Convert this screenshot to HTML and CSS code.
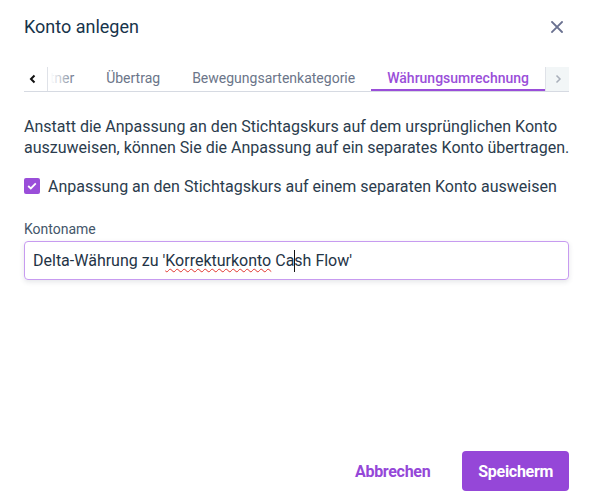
FILE: index.html
```html
<!DOCTYPE html>
<html lang="de">
<head>
<meta charset="utf-8">
<title>Konto anlegen</title>
<link rel="stylesheet" href="styles.css">
</head>
<body>
<div class="dialog">
  <header class="dialog-header">
    <h1 class="dialog-title">Konto anlegen</h1>
    <button class="close-btn" aria-label="Schließen">
      <svg width="12" height="12" viewBox="0 0 12 12"><path d="M1 1 L11 11 M11 1 L1 11" stroke="currentColor" stroke-width="1.8" fill="none" stroke-linecap="square"/></svg>
    </button>
  </header>

  <nav class="tabs">
    <button class="tab-scroll tab-scroll-left" aria-label="Zurück">
      <svg width="8" height="10" viewBox="0 0 8 10"><path d="M5.5 1.5 L2 5 L5.5 8.5" stroke="currentColor" stroke-width="2" fill="none"/></svg>
    </button>
    <div class="tab-viewport">
      <div class="tab-list">
        <span class="tab">Partner</span>
        <span class="tab">Übertrag</span>
        <span class="tab">Bewegungsartenkategorie</span>
        <span class="tab tab-active">Währungsumrechnung</span>
      </div>
    </div>
    <button class="tab-scroll tab-scroll-right" aria-label="Weiter" disabled>
      <svg width="8" height="10" viewBox="0 0 8 10"><path d="M2.5 1.5 L6 5 L2.5 8.5" stroke="currentColor" stroke-width="1.5" fill="none"/></svg>
    </button>
  </nav>

  <section class="dialog-body">
    <p class="intro">Anstatt die Anpassung an den Stichtagskurs auf dem ursprünglichen Konto auszuweisen, können Sie die Anpassung auf ein separates Konto übertragen.</p>

    <label class="check-row">
      <span class="checkbox">
        <svg width="10" height="8" viewBox="0 0 10 8"><path d="M1.2 4 L3.8 6.4 L8.8 1.4" stroke="#fff" stroke-width="1.8" fill="none"/></svg>
      </span>
      <span>Anpassung an den Stichtagskurs auf einem separaten Konto ausweisen</span>
    </label>

    <div class="field">
      <div class="field-label">Kontoname</div>
      <div class="text-input">Delta-Währung zu '<span class="misspelled">Korrekturkonto</span> Ca<span class="caret"></span>sh Flow'</div>
    </div>
  </section>

  <footer class="dialog-footer">
    <button class="btn btn-text">Abbrechen</button>
    <button class="btn btn-primary">Speicherm</button>
  </footer>
</div>
</body>
</html>
```

FILE: styles.css
```css
* { box-sizing: border-box; }

html, body {
  margin: 0;
  padding: 0;
  background: #ffffff;
}

body {
  font-family: Roboto, "Noto Sans", sans-serif;
  color: #2b3c4d;
}

button {
  font-family: inherit;
  border: none;
  background: none;
  padding: 0;
  cursor: pointer;
}

.dialog {
  width: 592px;
  height: 504px;
  display: flex;
  flex-direction: column;
  padding: 0 23px 0 24px;
}

/* header */
.dialog-header {
  display: flex;
  align-items: center;
  justify-content: space-between;
  padding-top: 15px;
}

.dialog-title {
  margin: 0;
  font-size: 18px;
  line-height: 24px;
  font-weight: 400;
  color: #17344b;
}

.close-btn {
  width: 24px;
  height: 24px;
  display: flex;
  align-items: center;
  justify-content: center;
  color: #6a7190;
}

/* tabs */
.tabs {
  margin-top: 28px;
  display: flex;
  height: 25px;
  border-bottom: 1px solid #d6dae2;
}

.tab-scroll {
  width: 24px;
  height: 24px;
  flex: none;
  display: flex;
  align-items: center;
  justify-content: center;
}

.tab-scroll-left {
  color: #111;
  border-right: 1px solid #dfe2e8;
  padding-right: 6px;
}

.tab-scroll-right {
  color: #a8afba;
  background: #f2f6f7;
  border-left: 1px solid #dfe2e8;
  cursor: default;
}

.tab-viewport {
  flex: 1;
  position: relative;
  overflow: hidden;
  display: flex;
  justify-content: flex-end;
}

.tab-viewport::before {
  content: "";
  position: absolute;
  left: 0;
  top: 0;
  bottom: 0;
  width: 26px;
  background: linear-gradient(to right, #fff 10%, rgba(255, 255, 255, 0.4) 70%, rgba(255, 255, 255, 0));
  z-index: 1;
}

.tab-list {
  display: flex;
  flex: none;
}

.tab {
  height: 24px;
  display: flex;
  align-items: center;
  padding: 0 16px 2px;
  font-size: 14px;
  color: #6b7589;
  white-space: nowrap;
}

.tab-active {
  color: #9a4ed9;
  font-weight: 500;
  box-shadow: inset 0 -2px 0 #9a4ed9;
}

/* body */
.dialog-body {
  display: flex;
  flex-direction: column;
}

.intro {
  margin: 24px -14px 0 0;
  font-size: 16px;
  line-height: 21px;
  color: #2b3c4d;
}

.check-row {
  margin-top: 16px;
  height: 24px;
  display: flex;
  align-items: center;
  gap: 8px;
  font-size: 16px;
  color: #2b3c4d;
}

.checkbox {
  width: 16px;
  height: 16px;
  border-radius: 2px;
  background: #9a4ed9;
  display: flex;
  align-items: center;
  justify-content: center;
}

.field {
  margin-top: 21px;
}

.field-label {
  font-size: 14px;
  line-height: 20px;
  color: #44566a;
  margin-bottom: 2px;
}

.text-input {
  height: 39px;
  border: 1px solid #c79bf0;
  border-radius: 4px;
  padding: 0 8px;
  display: flex;
  align-items: center;
  font-size: 16px;
  color: #1f3446;
  white-space: pre;
  box-shadow: 0 2px 5px rgba(40, 50, 70, 0.12);
}

.misspelled {
  text-decoration: underline wavy #e0342c;
  text-decoration-thickness: 1px;
  text-underline-offset: 2px;
  text-decoration-skip-ink: none;
}

.caret {
  display: inline-block;
  width: 0;
  height: 22px;
  border-left: 1px solid #111;
  margin-right: -1px;
}

/* footer */
.dialog-footer {
  margin-top: auto;
  padding-bottom: 13px;
  display: flex;
  justify-content: flex-end;
  gap: 16px;
}

.btn {
  height: 40px;
  padding: 0 16px;
  font-size: 16px;
  font-weight: 700;
  letter-spacing: -0.3px;
  border-radius: 4px;
}

.btn-text {
  color: #9547d8;
}

.btn-primary {
  background: #9547d8;
  color: #ffffff;
}
```
